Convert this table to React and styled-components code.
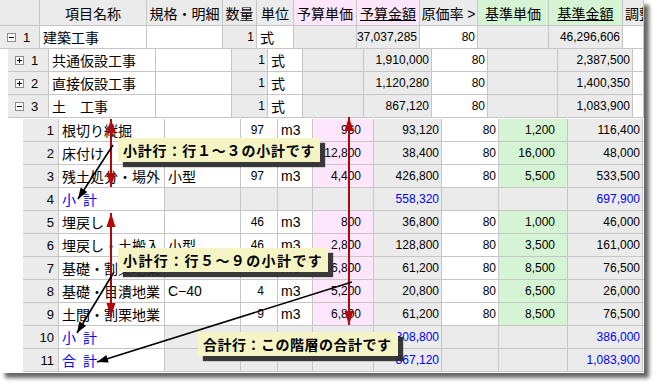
import React from "react";
import styled, { createGlobalStyle } from "styled-components";

const GlobalStyle = createGlobalStyle`
  html, body { margin: 0; padding: 0; background: #fff; }
  body { font-family: "Liberation Sans", "Noto Sans CJK JP", sans-serif; }
`;

const BG = {
  white: "#ffffff",
  grey: "#ebebeb",
  pink: "#fde6fb",
  green: "#d5f4d3",
};

const Page = styled.div`
  width: 658px;
  height: 388px;
  background: #fff;
  overflow: hidden;
`;

const Frame = styled.div`
  position: relative;
  width: 644px;
  height: 373px;
  background: #fff;
  box-shadow: 5px 5px 4px rgba(0, 0, 0, 0.6);
  overflow: hidden;
`;

const Row = styled.div`
  display: flex;
  height: ${(p) => p.$h}px;
  padding-left: ${(p) => p.$indent}px;
  margin-top: ${(p) => p.$gap || 0}px;
`;

const Cell = styled.div`
  box-sizing: border-box;
  flex: ${(p) => (p.$grow ? "1 1 auto" : "none")};
  width: ${(p) => (p.$grow ? "auto" : `${p.$w}px`)};
  height: 100%;
  border-right: 1px solid #c6c6c6;
  border-bottom: 1px solid #c6c6c6;
  background: ${(p) => BG[p.$bg] || "#fff"};
  display: flex;
  align-items: center;
  justify-content: ${(p) => (p.$align === "right" ? "flex-end" : p.$align === "center" ? "center" : "flex-start")};
  padding: 0 ${(p) => p.$pr ?? 3}px 0 ${(p) => p.$pl ?? 3}px;
  font-size: ${(p) => (p.$num ? "12px" : "14px")};
  color: ${(p) => (p.$blue ? "#0000ff" : "#000")};
  text-decoration: ${(p) => (p.$under ? "underline" : "none")};
  white-space: nowrap;
  overflow: hidden;
`;

const Toggle = styled.span`
  box-sizing: border-box;
  position: relative;
  width: 9px;
  height: 9px;
  border: 1px solid #8c8c8c;
  background: #fff;
  margin-right: 7px;
  flex: none;
  &::before {
    content: "";
    position: absolute;
    left: 1px;
    top: 3px;
    width: 5px;
    height: 1px;
    background: #000;
  }
  &::after {
    content: "";
    display: ${(p) => (p.$open ? "none" : "block")};
    position: absolute;
    left: 3px;
    top: 1px;
    width: 1px;
    height: 5px;
    background: #000;
  }
`;

const RowNo = styled.span`
  font-size: 13px;
`;

const Overlay = styled.svg`
  position: absolute;
  left: 0;
  top: 0;
  pointer-events: none;
`;

const Callout = styled.div`
  position: absolute;
  left: ${(p) => p.$x}px;
  top: ${(p) => p.$y}px;
  height: 24px;
  padding: 0 ${(p) => p.$pad}px 0 5px;
  background: #f4f4c4;
  box-shadow: 5px 5px 1px rgba(40, 40, 40, 0.92);
  font-family: "Noto Sans CJK JP", sans-serif;
  font-weight: 700;
  font-size: 14px;
  letter-spacing: ${(p) => p.$ls}px;
  line-height: 24px;
  color: #000;
  white-space: nowrap;
`;

const LEVELS = {
  1: { indent: 0, w: [40, 107, 76, 34, 37, 63, 63, 58, 71, 74] },
  2: { indent: 8, w: [41, 107, 76, 36, 35, 61, 68, 56, 70, 75] },
  3: { indent: 23, w: [36, 106, 76, 37, 35, 61, 68, 57, 69, 75] },
};

const FILL = {
  group: ["grey", "white", "white", "grey", "white", "grey", "grey", "white", "grey", "grey", "white"],
  item: ["grey", "white", "white", "white", "white", "pink", "grey", "white", "green", "grey", "white"],
  sub: ["grey", "white", "grey", "grey", "grey", "grey", "grey", "grey", "grey", "grey", "white"],
};

const HEAD = [
  { t: "", bg: "grey" },
  { t: "項目名称", bg: "grey" },
  { t: "規格・明細", bg: "grey" },
  { t: "数量", bg: "grey" },
  { t: "単位", bg: "grey" },
  { t: "予算単価", bg: "pink" },
  { t: "予算金額", bg: "pink", under: true },
  { t: "原価率 >", bg: "grey" },
  { t: "基準単価", bg: "green" },
  { t: "基準金額", bg: "green", under: true },
  { t: "調整", bg: "grey" },
];

const ROWS = [
  { lv: 1, kind: "group", no: 1, open: true, v: ["建築工事", "", "1", "式", "", "37,037,285", "80", "", "46,296,606"] },
  { lv: 2, kind: "group", no: 1, open: false, v: ["共通仮設工事", "", "1", "式", "", "1,910,000", "80", "", "2,387,500"] },
  { lv: 2, kind: "group", no: 2, open: false, v: ["直接仮設工事", "", "1", "式", "", "1,120,280", "80", "", "1,400,350"] },
  { lv: 2, kind: "group", no: 3, open: true, v: ["土　工事", "", "1", "式", "", "867,120", "80", "", "1,083,900"] },
  { lv: 3, kind: "item", no: 1, v: ["根切り縦掘", "", "97", "m3", "960", "93,120", "80", "1,200", "116,400"] },
  { lv: 3, kind: "item", no: 2, v: ["床付け", "", "3", "m3", "12,800", "38,400", "80", "16,000", "48,000"] },
  { lv: 3, kind: "item", no: 3, v: ["残土処分・場外", "小型", "97", "m3", "4,400", "426,800", "80", "5,500", "533,500"] },
  { lv: 3, kind: "sub", no: 4, v: ["小\u2002計", "", "", "", "", "558,320", "", "", "697,900"] },
  { lv: 3, kind: "item", no: 5, v: ["埋戻し", "", "46", "m3", "800", "36,800", "80", "1,000", "46,000"] },
  { lv: 3, kind: "item", no: 6, v: ["埋戻し・土搬入", "小型", "46", "m3", "2,800", "128,800", "80", "3,500", "161,000"] },
  { lv: 3, kind: "item", no: 7, v: ["基礎・割栗地業", "", "9", "m3", "6,800", "61,200", "80", "8,500", "76,500"] },
  { lv: 3, kind: "item", no: 8, v: ["基礎・目潰地業", "C−40", "4", "m3", "5,200", "20,800", "80", "6,500", "26,000"] },
  { lv: 3, kind: "item", no: 9, v: ["土間・割栗地業", "", "9", "m3", "6,800", "61,200", "80", "8,500", "76,500"] },
  { lv: 3, kind: "sub", no: 10, v: ["小\u2002計", "", "", "", "", "308,800", "", "", "386,000"] },
  { lv: 3, kind: "sub", no: 11, v: ["合\u2002計", "", "", "", "", "867,120", "", "", "1,083,900"] },
];

// column index (1-based after row header) -> alignment and padding
const colFormat = (i, kind) => {
  switch (i) {
    case 1:
    case 2:
    case 4:
      return { align: "left", pl: 3, num: i === 4 };
    case 3:
      return { align: "right", pr: kind === "item" ? 13 : 2, num: true };
    case 5:
    case 8:
      return { align: "right", pr: 12, num: true };
    default:
      return { align: "right", pr: 2, num: true };
  }
};

const HeaderRow = () => (
  <Row $h={26} $indent={0}>
    {HEAD.map((h, i) => (
      <Cell
        key={i}
        $w={LEVELS[1].w[i]}
        $grow={i === HEAD.length - 1}
        $bg={h.bg}
        $align={i === HEAD.length - 1 ? "left" : "center"}
        $pl={i === HEAD.length - 1 ? 2 : 0}
        $pr={0}
        $under={h.under}
      >
        {h.t}
      </Cell>
    ))}
  </Row>
);

const DataRow = ({ row, gap }) => {
  const { w, indent } = LEVELS[row.lv];
  const fill = FILL[row.kind];
  const blue = row.kind === "sub";
  return (
    <Row $h={23} $indent={indent} $gap={gap}>
      <Cell
        $w={w[0]}
        $bg={fill[0]}
        $align={row.lv === 3 ? "right" : "left"}
        $pl={row.lv === 3 ? 0 : 7}
        $pr={row.lv === 3 ? 4 : 0}
      >
        {row.lv !== 3 && <Toggle $open={row.open} />}
        <RowNo>{row.no}</RowNo>
      </Cell>
      {row.v.map((t, k) => {
        const i = k + 1;
        const f = colFormat(i, row.kind);
        return (
          <Cell
            key={i}
            $w={w[i]}
            $bg={fill[i]}
            $align={f.align}
            $pl={f.pl ?? 0}
            $pr={f.pr ?? 0}
            $num={f.num && /^[0-9,]+$/.test(t)}
            $blue={blue}
          >
            {t}
          </Cell>
        );
      })}
      <Cell $grow $bg={fill[10]} />
    </Row>
  );
};

const arrowHead = (x1, y1, x2, y2, len, half) => {
  const dx = x2 - x1;
  const dy = y2 - y1;
  const d = Math.hypot(dx, dy);
  const ux = dx / d;
  const uy = dy / d;
  const bx = x2 - ux * len;
  const by = y2 - uy * len;
  const px = -uy;
  const py = ux;
  return `${x2},${y2} ${bx + px * half},${by + py * half} ${bx - px * half},${by - py * half}`;
};

const Arrow = ({ x1, y1, x2, y2, color, width, both, len = 11, half = 4 }) => (
  <g fill={color}>
    <line x1={x1} y1={y1} x2={x2} y2={y2} stroke={color} strokeWidth={width} />
    <polygon points={arrowHead(x1, y1, x2, y2, len, half)} />
    {both && <polygon points={arrowHead(x2, y2, x1, y1, len, half)} />}
  </g>
);

const RED = "#b40808";

export default function App() {
  return (
    <Page>
      <GlobalStyle />
      <Frame>
        <HeaderRow />
        {ROWS.map((r, i) => (
          <DataRow key={i} row={r} gap={i === 4 ? 1 : 0} />
        ))}
        <Overlay width="644" height="373" viewBox="0 0 644 373">
          <Arrow x1={111} y1={119} x2={111} y2={187} color={RED} width={2} both len={14} half={4.5} />
          <Arrow x1={111} y1={213} x2={111} y2={317} color={RED} width={2} both len={14} half={4.5} />
          <Arrow x1={349} y1={117} x2={349} y2={325} color={RED} width={2} both len={14} half={4.5} />
          <Arrow x1={113} y1={145} x2={78} y2={199} color="#000" width={1.6} />
          <Arrow x1={114} y1={272} x2={77} y2={333} color="#000" width={1.6} />
          <Arrow x1={352} y1={282} x2={97} y2={362} color="#000" width={1.6} />
        </Overlay>
        <Callout $x={118} $y={138} $ls={0.8} $pad={5}>小計行：行１～３の小計です</Callout>
        <Callout $x={118} $y={248} $ls={1.4} $pad={5}>小計行：行５～９の小計です</Callout>
        <Callout $x={198} $y={332} $ls={0.5} $pad={6}>合計行：この階層の合計です</Callout>
      </Frame>
    </Page>
  );
}
